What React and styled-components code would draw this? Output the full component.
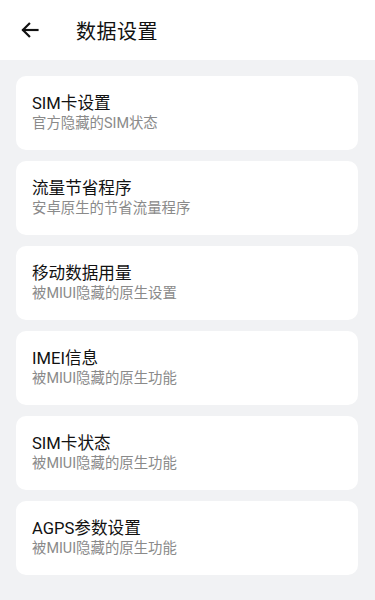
import React from "react";
import styled, { createGlobalStyle } from "styled-components";

const Global = createGlobalStyle`
  html, body { margin: 0; padding: 0; background: #f1f2f4; }
  body { font-family: Roboto, "Noto Sans", "Noto Sans CJK SC", sans-serif; -webkit-font-smoothing: antialiased; }
`;

const Page = styled.div`
  width: 375px;
  min-height: 600px;
  background: #f1f2f4;
  display: flex;
  flex-direction: column;
`;

const Header = styled.header`
  height: 60px;
  background: #ffffff;
  display: flex;
  align-items: center;
  padding-left: 19px;
  box-sizing: border-box;
`;

const BackButton = styled.button`
  width: 22px;
  height: 22px;
  padding: 0;
  border: none;
  background: none;
  display: flex;
  align-items: center;
  justify-content: center;
  margin-right: 35px;
`;

const Title = styled.h1`
  margin: 0;
  font-size: 20px;
  font-weight: 400;
  color: #111;
  font-family: "Noto Sans CJK SC", sans-serif;
  letter-spacing: 0.5px;
`;

const List = styled.div`
  display: flex;
  flex-direction: column;
  gap: 11px;
  padding: 16px 17px 24px 16px;
`;

const Card = styled.div`
  background: #ffffff;
  border-radius: 10px;
  height: 74px;
  box-sizing: border-box;
  padding: 17px 16px 0 16px;
  display: flex;
  flex-direction: column;
`;

const ItemTitle = styled.div`
  font-family: Roboto, "Noto Sans CJK SC", sans-serif;
  font-size: 16.6px;
  line-height: 21px;
  color: #111;
`;

const ItemSub = styled.div`
  font-family: Roboto, "Noto Sans CJK SC", sans-serif;
  font-size: 14.4px;
  line-height: 18px;
  margin-top: 1px;
  color: #8a8a8a;
`;

const items = [
  ["SIM卡设置", "官方隐藏的SIM状态"],
  ["流量节省程序", "安卓原生的节省流量程序"],
  ["移动数据用量", "被MIUI隐藏的原生设置"],
  ["IMEI信息", "被MIUI隐藏的原生功能"],
  ["SIM卡状态", "被MIUI隐藏的原生功能"],
  ["AGPS参数设置", "被MIUI隐藏的原生功能"],
];

export default function App() {
  return (
    <Page>
      <Global />
      <Header>
        <BackButton aria-label="back">
          <svg width="20" height="20" viewBox="0 0 24 24" fill="none" stroke="#111" strokeWidth="2.6" strokeLinecap="square">
            <path d="M21 12H4" />
            <path d="M11 4.5L3.5 12L11 19.5" strokeLinejoin="miter" />
          </svg>
        </BackButton>
        <Title>数据设置</Title>
      </Header>
      <List>
        {items.map(([t, s]) => (
          <Card key={t}>
            <ItemTitle>{t}</ItemTitle>
            <ItemSub>{s}</ItemSub>
          </Card>
        ))}
      </List>
    </Page>
  );
}
